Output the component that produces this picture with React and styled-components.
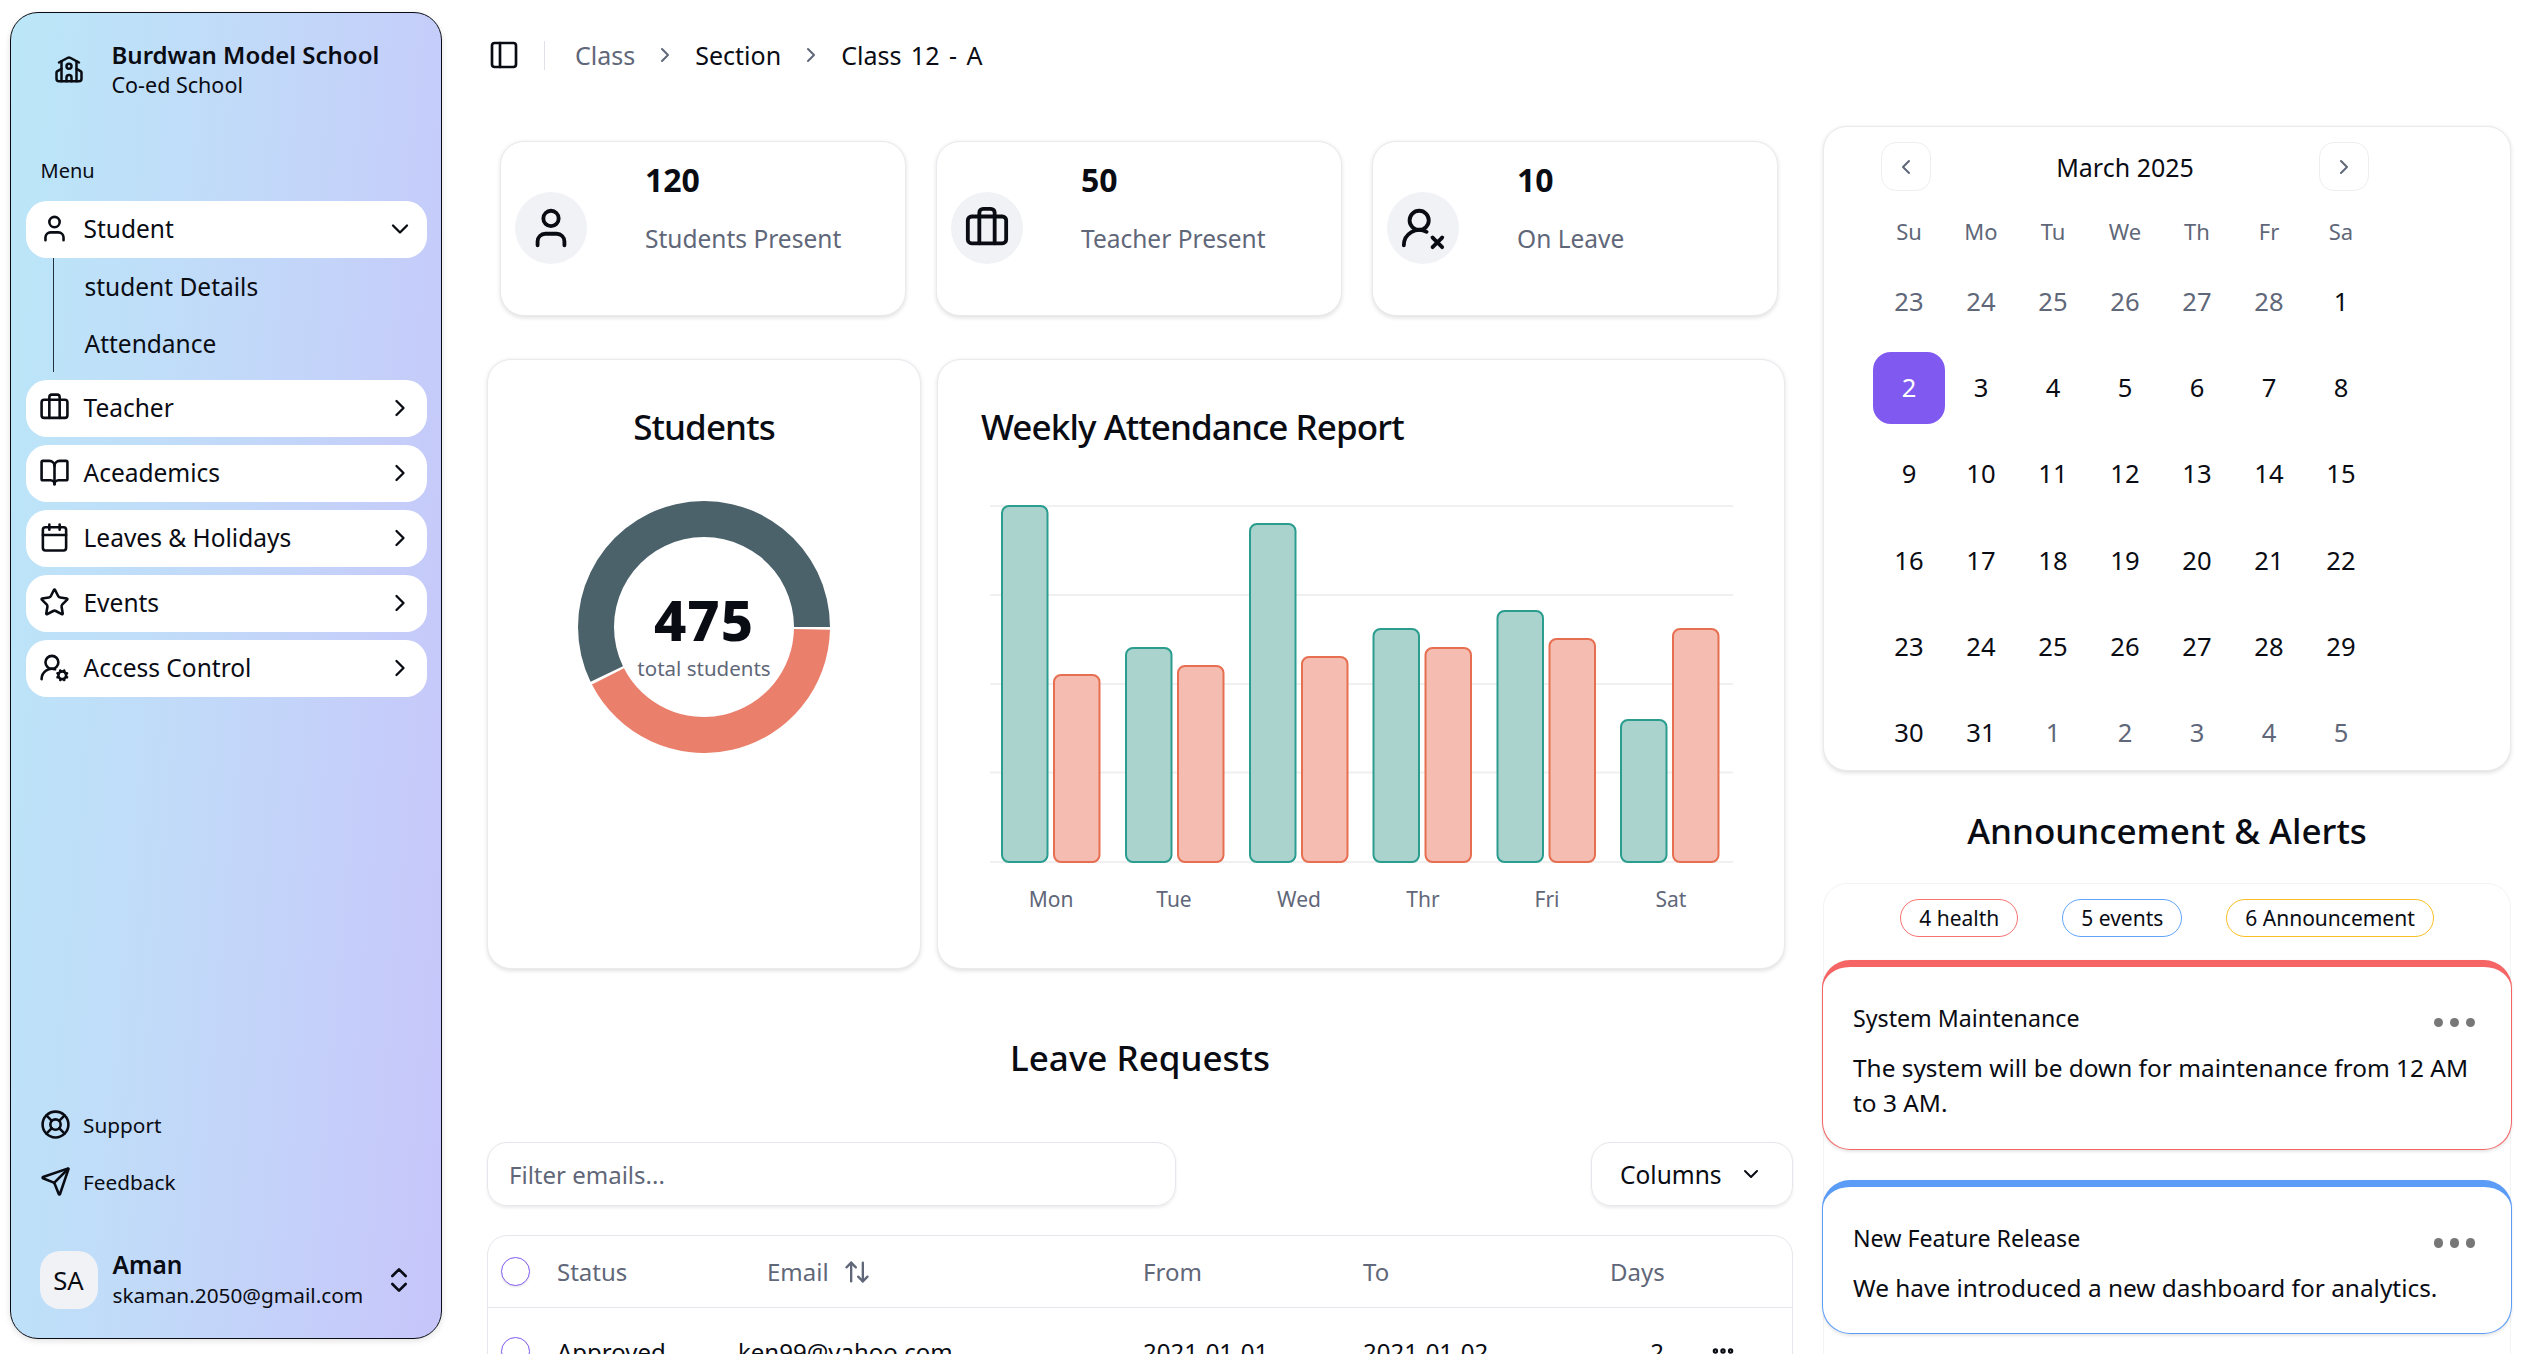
import React from "react";
import styled, { createGlobalStyle } from "styled-components";
import {
  ArrowUpDown, BookOpen, Briefcase, Calendar, ChevronDown, ChevronLeft, ChevronRight,
  ChevronsUpDown, Ellipsis, LifeBuoy, PanelLeft, School, Send, Star, User, UserRoundCog, UserRoundX,
} from "lucide-react";

const GlobalStyle = createGlobalStyle`
  * { box-sizing: border-box; }
  html, body { margin: 0; height: 1354px; overflow: hidden; background: #fff; }
  body { font-family: "Noto Sans", "Open Sans", sans-serif; color: #0a0c14; }
`;

const muted = "#5f6779";

// Layout
const Page = styled.div`
  display: flex;
  width: 2524px;
  height: 1354px;
  overflow: hidden;
`;

const Main = styled.main`
  flex: 1;
  min-width: 0;
  padding: 0 13px 0 45px;
`;

const Content = styled.div`
  display: grid;
  grid-template-columns: 1306px 688px;
  column-gap: 30px;
`;

// Sidebar
const Sidebar = styled.aside`
  flex: none;
  display: flex;
  flex-direction: column;
  width: 432px;
  height: 1327px;
  margin: 12px 0 0 10px;
  padding: 0 14px 0 14.5px;
  border: 1.5px solid #0a0c14;
  border-radius: 28px;
  background: linear-gradient(95deg, #bbe7f8 0%, #c2d8f9 50%, #c7c5fa 100%);
  box-shadow: 0 2px 6px rgba(0, 0, 0, 0.12);
`;

const Brand = styled.div`
  flex: none;
  display: flex;
  align-items: center;
  height: 114px;
  padding: 0 0 0 28px;
  gap: 28px;
  & > svg { flex: none; }
`;

const BrandName = styled.div`
  font-size: 24px;
  font-weight: 600;
  line-height: 30px;
`;

const BrandSub = styled.div`
  font-size: 21.5px;
  line-height: 30px;
`;

const MenuLabel = styled.div`
  margin: 32px 0 18px 15px;
  font-size: 20px;
  line-height: 24px;
`;

const NavRow = styled.div`
  flex: none;
  display: flex;
  align-items: center;
  height: 57px;
  margin-bottom: ${(p) => (p.$open ? 0 : "8px")};
  padding: 0 13px 2px;
  gap: 14px;
  border-radius: 21px;
  background: #fff;
  font-size: 24.5px;
  & > span { flex: 1; }
`;

const SubList = styled.div`
  flex: none;
  display: flex;
  flex-direction: column;
  height: 114px;
  margin: 0 0 8px 27px;
  padding: 0 0 0 31px;
  border-left: 1.5px solid #25303f;
`;

const SubItem = styled.div`
  display: flex;
  align-items: center;
  height: 57px;
  font-size: 24.5px;
`;

const Spacer = styled.div`
  flex: 1;
`;

const FootLink = styled.div`
  display: flex;
  align-items: center;
  height: 57px;
  padding-left: 14px;
  gap: 12.5px;
  font-size: 20.8px;
`;

const UserRow = styled.div`
  display: flex;
  align-items: center;
  margin: 40px 0 28px 14px;
  gap: 15px;
`;

const Avatar = styled.div`
  flex: none;
  display: flex;
  align-items: center;
  justify-content: center;
  width: 58px;
  height: 58px;
  border-radius: 20px;
  background: #f1f2f6;
  font-size: 25.6px;
`;

const UserInfo = styled.div`
  flex: 1;
`;

const UserName = styled.div`
  font-size: 24.5px;
  font-weight: 600;
  line-height: 30px;
`;

const UserMail = styled.div`
  font-size: 20.8px;
  line-height: 30px;
`;

const UserToggle = styled.div`
  display: flex;
  margin-right: 12px;
`;

// Top bar
const TopBar = styled.header`
  display: flex;
  align-items: center;
  height: 110px;
  padding: 0 0 0 1px;
  font-size: 25px;
  word-spacing: 3px;
`;

const TopDivider = styled.div`
  width: 1px;
  height: 29px;
  margin: 0 30px 0 24px;
  background: #dfe1e6;
`;

const Crumb = styled.span`
  color: ${(p) => (p.$muted ? muted : "#0a0c14")};
`;

const CrumbSep = styled.span`
  display: flex;
  width: 60px;
  justify-content: center;
  color: ${muted};
`;

// Cards
const Card = styled.section`
  border: 1.5px solid #e9eaee;
  border-radius: 24px;
  background: #fff;
  box-shadow: 0 1.5px 4px rgba(0, 0, 0, 0.12);
`;

const LeftColumn = styled.div`
  padding-top: 31px;
  min-width: 0;
`;

const RightColumn = styled.div`
  padding-top: 16px;
  min-width: 0;
`;

const StatRow = styled.div`
  display: flex;
  gap: 30px;
  padding: 0 13px;
`;

const StatCard = styled(Card)`
  display: flex;
  width: 406px;
  height: 175px;
  padding: 0 0 0 14px;
  gap: 58px;
`;

const StatIcon = styled.div`
  flex: none;
  display: flex;
  align-items: center;
  justify-content: center;
  width: 72px;
  height: 72px;
  margin-top: 50px;
  border-radius: 50%;
  background: #f1f2f6;
`;

const StatValue = styled.div`
  margin-top: 17px;
  font-size: 32px;
  font-weight: 700;
  line-height: 42px;
`;

const StatLabel = styled.div`
  margin-top: 22px;
  font-size: 24.5px;
  line-height: 32px;
  color: ${muted};
`;

const ChartRow = styled.div`
  display: flex;
  gap: 16px;
  margin-top: 43px;
  padding-right: 8px;
`;

const DonutCard = styled(Card)`
  flex: none;
  width: 434px;
  height: 610px;
  text-align: center;
`;

const BarCard = styled(Card)`
  flex: 1;
  height: 610px;
`;

const CardTitle = styled.h2`
  margin: 0;
  padding: ${(p) => (p.$center ? "44px 0 0" : "44px 0 0 43px")};
  font-size: 35px;
  font-weight: 500;
  line-height: 46px;
  letter-spacing: -0.9px;
`;

const Donut = styled.svg`
  display: block;
  margin: 50.6px auto 0;
`;

const Bars = styled.svg`
  display: block;
  margin-top: 45px;
`;

const SectionTitle = styled.h2`
  margin: 66px 0 0;
  text-align: center;
  font-size: 35px;
  font-weight: 500;
  line-height: 46px;
`;

const ToolRow = styled.div`
  display: flex;
  justify-content: space-between;
  margin-top: 61px;
`;

const FilterInput = styled.div`
  display: flex;
  align-items: center;
  width: 689px;
  height: 64px;
  padding-left: 21px;
  border: 1.5px solid #e6e7ec;
  border-radius: 20px;
  box-shadow: 0 1.5px 3px rgba(0, 0, 0, 0.08);
  font-size: 24px;
  color: ${muted};
`;

const ColumnsButton = styled(FilterInput)`
  justify-content: flex-start;
  width: 202px;
  padding-left: 28px;
  gap: 17px;
  font-size: 24.5px;
  color: #0a0c14;
`;

const TableBox = styled.div`
  margin-top: 29px;
  height: 200px;
  border: 1.5px solid #e6e7ec;
  border-radius: 20px;
`;

const TableRow = styled.div`
  display: grid;
  grid-template-columns: 56px 181px 405px 220px 247px 54px 1fr;
  align-items: center;
  height: ${(p) => (p.$head ? "72px" : "86px")};
  padding-left: 13px;
  border-bottom: ${(p) => (p.$head ? "1.5px solid #e6e7ec" : "none")};
  font-size: 24px;
  color: ${(p) => (p.$head ? muted : "#0a0c14")};
`;

const RoundCheck = styled.div`
  width: 29px;
  height: 29px;
  border: 1.5px solid #8059f0;
  border-radius: 50%;
  box-shadow: 0 1px 2px rgba(0, 0, 0, 0.12);
`;

const EmailHead = styled.div`
  display: flex;
  align-items: center;
  gap: 14px;
  padding-left: 29px;
`;

const RightCell = styled.div`
  text-align: right;
`;

const ActionCell = styled.div`
  display: flex;
  padding-left: 46px;
`;

// Calendar
const CalendarCard = styled(Card)`
  height: 645px;
  padding: 15px 0 0 49px;
`;

const CalendarHead = styled.div`
  display: flex;
  align-items: center;
  justify-content: space-between;
  width: 504px;
  padding: 0 8px;
  font-size: 25px;
`;

const NavButton = styled.div`
  display: flex;
  align-items: center;
  justify-content: center;
  width: 50px;
  height: 49px;
  border: 1px solid #eceef1;
  border-radius: 15px;
  color: ${muted};
`;

const WeekGrid = styled.div`
  display: grid;
  grid-template-columns: repeat(7, 72px);
  margin-top: 22px;
  font-size: 22px;
  line-height: 36px;
  color: ${muted};
  text-align: center;
`;

const DayGrid = styled.div`
  display: grid;
  grid-template-columns: repeat(7, 72px);
  grid-auto-rows: 72px;
  row-gap: 14.4px;
  margin-top: 17px;
  font-size: 25.6px;
`;

const Day = styled.div`
  display: flex;
  align-items: center;
  justify-content: center;
  padding-bottom: 2px;
  border-radius: 18px;
  background: ${(p) => (p.$selected ? "#8059f0" : "transparent")};
  color: ${(p) => (p.$selected ? "#fff" : p.$muted ? muted : "#0a0c14")};
`;

// Announcements
const AlertsTitle = styled.h2`
  margin: 35.5px 0 0;
  text-align: center;
  font-size: 35px;
  font-weight: 500;
  line-height: 48px;
`;

const AlertPanel = styled.div`
  height: 500px;
  margin-top: 28.5px;
  padding-top: 15px;
  border: 1px solid #f2f3f5;
  border-radius: 24px;
`;

const ChipRow = styled.div`
  display: flex;
  justify-content: center;
  gap: 44px;
`;

const Chip = styled.div`
  display: flex;
  align-items: center;
  height: 37.5px;
  padding: 0 18px;
  border: 1.5px solid ${(p) => p.$color};
  border-radius: 19px;
  font-size: 21px;
`;

const AlertCard = styled.div`
  position: relative;
  margin: ${(p) => (p.$first ? "23px -2px 0" : "30.5px -2px 0")};
  height: ${(p) => p.$height}px;
  padding: 33px 30px 0;
  border: 1.5px solid ${(p) => p.$color};
  border-top-width: 7px;
  border-radius: 28px;
  background: #fff;
  box-shadow: 0 1.5px 3px rgba(0, 0, 0, 0.1);
`;

const AlertHead = styled.div`
  display: flex;
  align-items: center;
  justify-content: space-between;
  font-size: 23.2px;
  line-height: 36px;
`;

const AlertBody = styled.div`
  margin-top: 14px;
  font-size: 24.4px;
  line-height: 35.6px;
`;

const Dots = styled.div`
  display: flex;
  gap: 6.5px;
  margin: 10px 6px 0 0;
`;

const Dot = styled.span`
  width: 9.5px;
  height: 9.5px;
  border-radius: 50%;
  background: #777;
`;

// Data
const navItems = [
  { label: "Teacher", Icon: Briefcase },
  { label: "Aceademics", Icon: BookOpen },
  { label: "Leaves & Holidays", Icon: Calendar },
  { label: "Events", Icon: Star },
  { label: "Access Control", Icon: UserRoundCog },
];

const stats = [
  { value: "120", label: "Students Present", Icon: User },
  { value: "50", label: "Teacher Present", Icon: Briefcase },
  { value: "10", label: "On Leave", Icon: UserRoundX },
];

const weekly = [
  { day: "Mon", x: 64, mid: 113, a: 356, b: 187 },
  { day: "Tue", x: 188, mid: 236, a: 214, b: 196 },
  { day: "Wed", x: 312, mid: 361, a: 338, b: 205 },
  { day: "Thr", x: 435.5, mid: 485, a: 233, b: 214 },
  { day: "Fri", x: 559.5, mid: 609, a: 251, b: 223 },
  { day: "Sat", x: 683, mid: 733, a: 142, b: 233 },
];

const weekDays = ["Su", "Mo", "Tu", "We", "Th", "Fr", "Sa"];

const prevDays = [23, 24, 25, 26, 27, 28];
const nextDays = [1, 2, 3, 4, 5];
const marchDays = Array.from({ length: 31 }, (_, i) => i + 1);

const polar = (r, deg) => {
  const a = (deg * Math.PI) / 180;
  return [126 + r * Math.cos(a), 126 + r * Math.sin(a)];
};

const ringPath = (from, to) => {
  const [x1, y1] = polar(126, from);
  const [x2, y2] = polar(126, to);
  const [x3, y3] = polar(90, to);
  const [x4, y4] = polar(90, from);
  const large = to - from > 180 ? 1 : 0;
  return `M${x1} ${y1}A126 126 0 ${large} 1 ${x2} ${y2}L${x3} ${y3}A90 90 0 ${large} 0 ${x4} ${y4}Z`;
};

const StudentsDonut = () => (
  <Donut width="252" height="252" viewBox="0 0 252 252">
    <path d={ringPath(154.2, 360)} fill="#4b626b" />
    <path d={ringPath(1.2, 152.8)} fill="#ea7f6c" />
    <text x="126" y="140" textAnchor="middle" fontSize="56" fontWeight="800" letterSpacing="1" fill="#0a0c14">475</text>
    <text x="126" y="175" textAnchor="middle" fontSize="20.5" fill={muted}>total students</text>
  </Donut>
);

const WeeklyBars = () => (
  <Bars width="846" height="420" viewBox="0 0 846 420">
    {[11, 100, 189, 277.5, 367].map((y) => (
      <line key={y} x1="52" x2="795" y1={y} y2={y} stroke="#f0f0f1" strokeWidth="2" />
    ))}
    {weekly.map((d) => (
      <g key={d.day}>
        <rect x={d.x} y={367 - d.a} width="45.5" height={d.a} rx="7" fill="#aad3ce" stroke="#2a9d8f" strokeWidth="2" />
        <rect x={d.x + 52} y={367 - d.b} width="45.5" height={d.b} rx="7" fill="#f5bdb1" stroke="#e76f51" strokeWidth="2" />
        <text x={d.mid} y="411.5" textAnchor="middle" fontSize="21" fill={muted}>{d.day}</text>
      </g>
    ))}
  </Bars>
);

const Alert = ({ title, color, height, first, children }) => (
  <AlertCard $color={color} $height={height} $first={first}>
    <AlertHead>
      {title}
      <Dots><Dot /><Dot /><Dot /></Dots>
    </AlertHead>
    <AlertBody>{children}</AlertBody>
  </AlertCard>
);

export default function App() {
  return (
    <Page>
      <GlobalStyle />
      <Sidebar>
        <Brand>
          <School size={30} strokeWidth={2} />
          <div>
            <BrandName>Burdwan Model School</BrandName>
            <BrandSub>Co-ed School</BrandSub>
          </div>
        </Brand>
        <MenuLabel>Menu</MenuLabel>
        <NavRow $open>
          <User size={31} strokeWidth={2} />
          <span>Student</span>
          <ChevronDown size={28} strokeWidth={2} />
        </NavRow>
        <SubList>
          <SubItem>student Details</SubItem>
          <SubItem>Attendance</SubItem>
        </SubList>
        {navItems.map(({ label, Icon }) => (
          <NavRow key={label}>
            <Icon size={31} strokeWidth={2} />
            <span>{label}</span>
            <ChevronRight size={28} strokeWidth={2} />
          </NavRow>
        ))}
        <Spacer />
        <FootLink><LifeBuoy size={31} strokeWidth={2} />Support</FootLink>
        <FootLink><Send size={31} strokeWidth={2} />Feedback</FootLink>
        <UserRow>
          <Avatar>SA</Avatar>
          <UserInfo>
            <UserName>Aman</UserName>
            <UserMail>skaman.2050@gmail.com</UserMail>
          </UserInfo>
          <UserToggle><ChevronsUpDown size={32} strokeWidth={2} /></UserToggle>
        </UserRow>
      </Sidebar>

      <Main>
        <TopBar>
          <PanelLeft size={32} strokeWidth={2} />
          <TopDivider />
          <Crumb $muted>Class</Crumb>
          <CrumbSep><ChevronRight size={24} strokeWidth={2} /></CrumbSep>
          <Crumb>Section</Crumb>
          <CrumbSep><ChevronRight size={24} strokeWidth={2} /></CrumbSep>
          <Crumb>Class 12 - A</Crumb>
        </TopBar>

        <Content>
          <LeftColumn>
            <StatRow>
              {stats.map(({ value, label, Icon }) => (
                <StatCard key={label}>
                  <StatIcon><Icon size={46} strokeWidth={2} /></StatIcon>
                  <div>
                    <StatValue>{value}</StatValue>
                    <StatLabel>{label}</StatLabel>
                  </div>
                </StatCard>
              ))}
            </StatRow>

            <ChartRow>
              <DonutCard>
                <CardTitle $center>Students</CardTitle>
                <StudentsDonut />
              </DonutCard>
              <BarCard>
                <CardTitle>Weekly Attendance Report</CardTitle>
                <WeeklyBars />
              </BarCard>
            </ChartRow>

            <SectionTitle>Leave Requests</SectionTitle>

            <ToolRow>
              <FilterInput>Filter emails...</FilterInput>
              <ColumnsButton>Columns <ChevronDown size={24} strokeWidth={2} /></ColumnsButton>
            </ToolRow>

            <TableBox>
              <TableRow $head>
                <RoundCheck />
                <div>Status</div>
                <EmailHead>Email <ArrowUpDown size={28} strokeWidth={2} /></EmailHead>
                <div>From</div>
                <div>To</div>
                <div>Days</div>
              </TableRow>
              <TableRow>
                <RoundCheck />
                <div>Approved</div>
                <div>ken99@yahoo.com</div>
                <div>2021-01-01</div>
                <div>2021-01-02</div>
                <RightCell>2</RightCell>
                <ActionCell><Ellipsis size={26} strokeWidth={3} /></ActionCell>
              </TableRow>
            </TableBox>
          </LeftColumn>

          <RightColumn>
            <CalendarCard>
              <CalendarHead>
                <NavButton><ChevronLeft size={24} strokeWidth={2} /></NavButton>
                March 2025
                <NavButton><ChevronRight size={24} strokeWidth={2} /></NavButton>
              </CalendarHead>
              <WeekGrid>
                {weekDays.map((d) => <div key={d}>{d}</div>)}
              </WeekGrid>
              <DayGrid>
                {prevDays.map((d) => <Day key={`p${d}`} $muted>{d}</Day>)}
                {marchDays.map((d) => <Day key={d} $selected={d === 2}>{d}</Day>)}
                {nextDays.map((d) => <Day key={`n${d}`} $muted>{d}</Day>)}
              </DayGrid>
            </CalendarCard>

            <AlertsTitle>Announcement &amp; Alerts</AlertsTitle>

            <AlertPanel>
              <ChipRow>
                <Chip $color="#f87171">4 health</Chip>
                <Chip $color="#60a5fa">5 events</Chip>
                <Chip $color="#fbbf24">6 Announcement</Chip>
              </ChipRow>
              <Alert title="System Maintenance" color="#f56565" height={190} first>
                The system will be down for maintenance from 12 AM to 3 AM.
              </Alert>
              <Alert title="New Feature Release" color="#5b9cf6" height={154}>
                We have introduced a new dashboard for analytics.
              </Alert>
            </AlertPanel>
          </RightColumn>
        </Content>
      </Main>
    </Page>
  );
}
